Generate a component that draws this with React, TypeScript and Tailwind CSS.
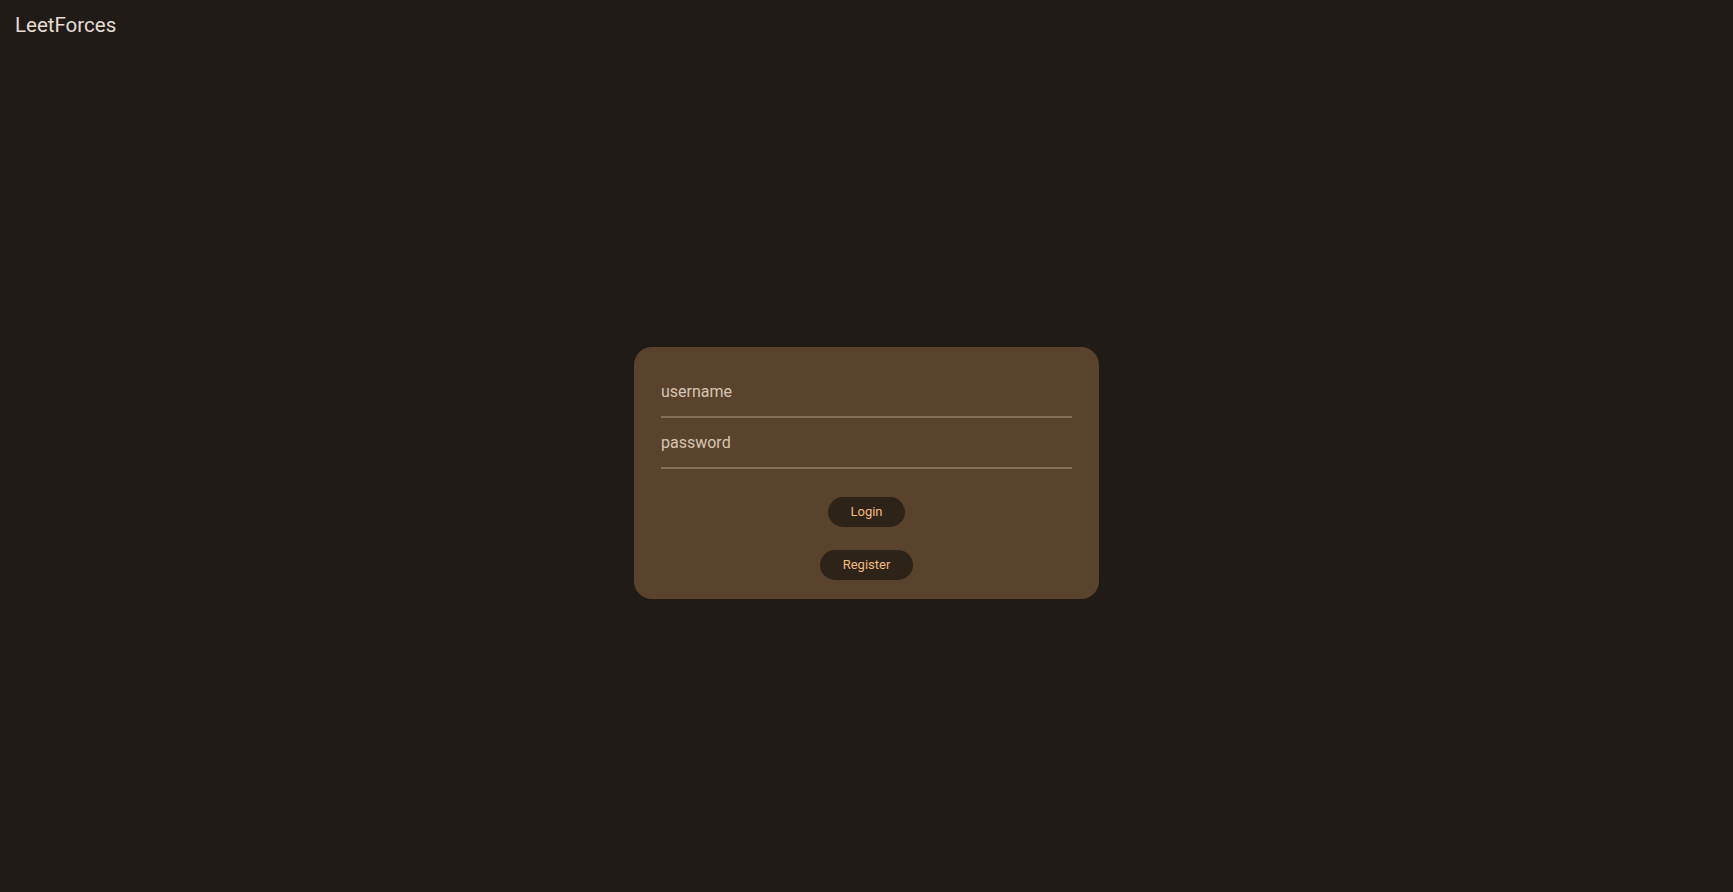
import { useState } from 'react'

export default function App() {
  const [username, setUsername] = useState('')
  const [password, setPassword] = useState('')

  return (
    <div className="min-h-screen flex flex-col bg-[#201b17] font-['Roboto',sans-serif]">
      {/* Header */}
      <header className="h-[54px] px-[15px] pt-[12px]">
        <span className="text-[20.5px] leading-[26px] text-[#e6ddd4]">LeetForces</span>
      </header>

      {/* Login card */}
      <main className="flex-1 flex items-center justify-center">
        <div className="w-[465px] h-[252px] rounded-[18px] bg-[#5a432c] px-[27px] pt-[26px] flex flex-col">
          <input
            value={username}
            onChange={(e) => setUsername(e.target.value)}
            placeholder="username"
            className="h-[45px] pb-[6px] bg-transparent border-b-2 border-[#86705a] text-[16px] text-[#e0d0c0] placeholder:text-[#d6c5b4] outline-none"
          />
          <input
            type="password"
            value={password}
            onChange={(e) => setPassword(e.target.value)}
            placeholder="password"
            className="mt-[6px] h-[45px] pb-[6px] bg-transparent border-b-2 border-[#86705a] text-[16px] text-[#e0d0c0] placeholder:text-[#d6c5b4] outline-none"
          />
          <div className="flex flex-col items-center gap-[23px] mt-[28px]">
            <button className="h-[30px] px-[22px] rounded-full bg-[#2e2318] text-[13px] text-[#f2bc80]">
              Login
            </button>
            <button className="h-[30px] px-[23px] rounded-full bg-[#2e2318] text-[13px] text-[#f2bc80]">
              Register
            </button>
          </div>
        </div>
      </main>
    </div>
  )
}
